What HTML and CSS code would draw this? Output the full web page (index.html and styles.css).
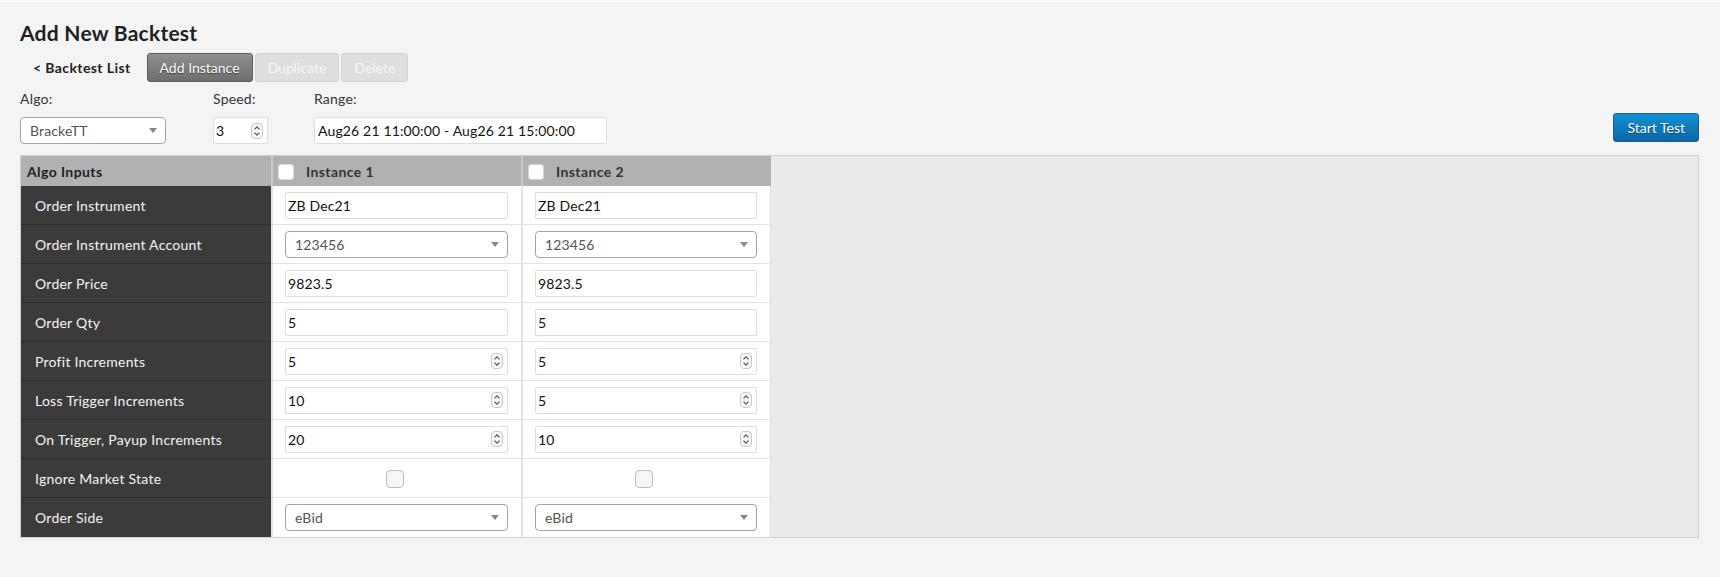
FILE: index.html
```html
<!DOCTYPE html>
<html lang="en">
<head>
<meta charset="utf-8">
<title>Add New Backtest</title>
<link rel="stylesheet" href="styles.css">
</head>
<body>
<div class="topstrip"></div>
<main class="page">
  <h1 class="title">Add New Backtest</h1>
  <div class="toolbar">
    <a class="back-link">&lt; Backtest List</a>
    <button class="btn btn-dark">Add Instance</button>
    <button class="btn btn-disabled">Duplicate</button>
    <button class="btn btn-disabled">Delete</button>
  </div>
  <div class="form-row">
    <div class="group group-algo">
      <label class="lbl">Algo:</label>
      <div class="select select-algo"><span class="sel-text">BrackeTT</span><svg class="caret" width="8" height="5" viewBox="0 0 8 5"><path d="M0 0h8L4 5z" fill="#888"/></svg></div>
    </div>
    <div class="group group-speed">
      <label class="lbl">Speed:</label>
      <div class="field field-speed"><span class="val">3</span><svg class="spin" width="12" height="16" viewBox="0 0 12 16"><rect x="0.5" y="0.5" width="11" height="15" rx="3.5" fill="#f7f7f7" stroke="#c9c9c9"/><path d="M3.5 6.3L6 3.8l2.5 2.5M3.5 9.7L6 12.2l2.5-2.5" fill="none" stroke="#555" stroke-width="1.2"/></svg></div>
    </div>
    <div class="group group-range">
      <label class="lbl">Range:</label>
      <div class="field field-range"><span class="val">Aug26 21 11:00:00 - Aug26 21 15:00:00</span></div>
    </div>
    <button class="btn btn-blue">Start Test</button>
  </div>

  <section class="panel">
    <table class="grid">
      <colgroup><col class="c-label"><col class="c-inst"><col class="c-inst"></colgroup>
      <thead>
        <tr>
          <th class="h-label">Algo Inputs</th>
          <th class="h-inst"><span class="hbox"></span>Instance 1</th>
          <th class="h-inst"><span class="hbox"></span>Instance 2</th>
        </tr>
      </thead>
      <tbody>
        <tr>
          <td class="label">Order Instrument</td>
          <td class="cell"><div class="field"><span class="val">ZB Dec21</span></div></td>
          <td class="cell"><div class="field"><span class="val">ZB Dec21</span></div></td>
        </tr>
        <tr>
          <td class="label">Order Instrument Account</td>
          <td class="cell"><div class="select"><span class="sel-text">123456</span><svg class="caret" width="8" height="5" viewBox="0 0 8 5"><path d="M0 0h8L4 5z" fill="#888"/></svg></div></td>
          <td class="cell"><div class="select"><span class="sel-text">123456</span><svg class="caret" width="8" height="5" viewBox="0 0 8 5"><path d="M0 0h8L4 5z" fill="#888"/></svg></div></td>
        </tr>
        <tr>
          <td class="label">Order Price</td>
          <td class="cell"><div class="field"><span class="val">9823.5</span></div></td>
          <td class="cell"><div class="field"><span class="val">9823.5</span></div></td>
        </tr>
        <tr>
          <td class="label">Order Qty</td>
          <td class="cell"><div class="field"><span class="val">5</span></div></td>
          <td class="cell"><div class="field"><span class="val">5</span></div></td>
        </tr>
        <tr>
          <td class="label">Profit Increments</td>
          <td class="cell"><div class="field"><span class="val">5</span><svg class="spin" width="12" height="16" viewBox="0 0 12 16"><rect x="0.5" y="0.5" width="11" height="15" rx="3.5" fill="#f7f7f7" stroke="#c9c9c9"/><path d="M3.5 6.3L6 3.8l2.5 2.5M3.5 9.7L6 12.2l2.5-2.5" fill="none" stroke="#555" stroke-width="1.2"/></svg></div></td>
          <td class="cell"><div class="field"><span class="val">5</span><svg class="spin" width="12" height="16" viewBox="0 0 12 16"><rect x="0.5" y="0.5" width="11" height="15" rx="3.5" fill="#f7f7f7" stroke="#c9c9c9"/><path d="M3.5 6.3L6 3.8l2.5 2.5M3.5 9.7L6 12.2l2.5-2.5" fill="none" stroke="#555" stroke-width="1.2"/></svg></div></td>
        </tr>
        <tr>
          <td class="label">Loss Trigger Increments</td>
          <td class="cell"><div class="field"><span class="val">10</span><svg class="spin" width="12" height="16" viewBox="0 0 12 16"><rect x="0.5" y="0.5" width="11" height="15" rx="3.5" fill="#f7f7f7" stroke="#c9c9c9"/><path d="M3.5 6.3L6 3.8l2.5 2.5M3.5 9.7L6 12.2l2.5-2.5" fill="none" stroke="#555" stroke-width="1.2"/></svg></div></td>
          <td class="cell"><div class="field"><span class="val">5</span><svg class="spin" width="12" height="16" viewBox="0 0 12 16"><rect x="0.5" y="0.5" width="11" height="15" rx="3.5" fill="#f7f7f7" stroke="#c9c9c9"/><path d="M3.5 6.3L6 3.8l2.5 2.5M3.5 9.7L6 12.2l2.5-2.5" fill="none" stroke="#555" stroke-width="1.2"/></svg></div></td>
        </tr>
        <tr>
          <td class="label">On Trigger, Payup Increments</td>
          <td class="cell"><div class="field"><span class="val">20</span><svg class="spin" width="12" height="16" viewBox="0 0 12 16"><rect x="0.5" y="0.5" width="11" height="15" rx="3.5" fill="#f7f7f7" stroke="#c9c9c9"/><path d="M3.5 6.3L6 3.8l2.5 2.5M3.5 9.7L6 12.2l2.5-2.5" fill="none" stroke="#555" stroke-width="1.2"/></svg></div></td>
          <td class="cell"><div class="field"><span class="val">10</span><svg class="spin" width="12" height="16" viewBox="0 0 12 16"><rect x="0.5" y="0.5" width="11" height="15" rx="3.5" fill="#f7f7f7" stroke="#c9c9c9"/><path d="M3.5 6.3L6 3.8l2.5 2.5M3.5 9.7L6 12.2l2.5-2.5" fill="none" stroke="#555" stroke-width="1.2"/></svg></div></td>
        </tr>
        <tr>
          <td class="label">Ignore Market State</td>
          <td class="cell center"><span class="checkbox"></span></td>
          <td class="cell center"><span class="checkbox"></span></td>
        </tr>
        <tr class="last">
          <td class="label">Order Side</td>
          <td class="cell"><div class="select"><span class="sel-text">eBid</span><svg class="caret" width="8" height="5" viewBox="0 0 8 5"><path d="M0 0h8L4 5z" fill="#888"/></svg></div></td>
          <td class="cell"><div class="select"><span class="sel-text">eBid</span><svg class="caret" width="8" height="5" viewBox="0 0 8 5"><path d="M0 0h8L4 5z" fill="#888"/></svg></div></td>
        </tr>
      </tbody>
    </table>
  </section>
</main>
</body>
</html>
```

FILE: styles.css
```css
* { box-sizing: border-box; }

html, body {
  margin: 0;
  padding: 0;
  background: #f4f4f4;
  font-family: Lato, "Open Sans", "Liberation Sans", sans-serif;
  color: #222;
}

.topstrip {
  height: 4px;
  background: #f9f9f9;
  border-bottom: 1px solid #ececec;
}

.page {
  padding: 16px 21px 0 20px;
}

.title {
  margin: 0;
  font-size: 21px;
  line-height: 25px;
  font-weight: 700;
  letter-spacing: 0.25px;
  color: #1d1f22;
}

.toolbar {
  display: flex;
  align-items: center;
  margin-top: 8px;
  gap: 2px;
}

.back-link {
  font-size: 14px;
  font-weight: 700;
  letter-spacing: 0.4px;
  color: #222;
  padding: 0 14px 0 13px;
  line-height: 17px;
}

.btn {
  font-family: inherit;
  font-size: 14px;
  line-height: 17px;
  padding: 5px 12px;
  border-radius: 3px;
  border: 1px solid transparent;
  cursor: default;
}

.btn-dark {
  background: linear-gradient(#909090, #6d6d6d);
  border-color: #5d5d5d;
  color: #fff;
  text-shadow: 0 1px 1px #3a3a3a;
}

.btn-disabled {
  background: #dedede;
  border-color: #d3d3d3;
  color: #f6f6f6;
}

.btn-blue {
  margin-left: auto;
  align-self: flex-end;
  margin-bottom: 2px;
  background: linear-gradient(#1292d6, #0867a7);
  border-color: #235d88;
  color: #fff;
  padding: 5px 13px;
  text-shadow: 0 1px 1px #0b3d63;
}

.form-row {
  display: flex;
  align-items: flex-end;
  margin-top: 8px;
}

.group {
  display: flex;
  flex-direction: column;
}

.group-algo { width: 146px; margin-right: 47px; }
.group-speed { width: 55px; margin-right: 46px; }
.group-range { width: 293px; }

.lbl {
  font-size: 14px;
  line-height: 18px;
  color: #333;
  letter-spacing: 0.2px;
  margin-bottom: 9px;
}

.field {
  display: flex;
  align-items: center;
  height: 27px;
  background: #fff;
  border: 1px solid #dedede;
  border-radius: 2px;
  padding: 0 4px 0 2px;
  font-size: 14px;
  letter-spacing: 0.15px;
  color: #111;
}

.field .val { flex: 1; white-space: nowrap; }

.field-range { padding-left: 3px; }

.spin { flex: none; }

.select {
  display: flex;
  align-items: center;
  height: 27px;
  background: #fff;
  border: 1px solid #a3a3a3;
  border-radius: 4px;
  padding: 0 8px 0 9px;
  font-size: 14px;
  letter-spacing: 0.15px;
  color: #555;
}

.select .sel-text { flex: 1; }
.caret { flex: none; }

.panel {
  margin-top: 11px;
  height: 383px;
  background: #ebebeb;
  border: 1px solid #cfcfcf;
  display: flex;
  align-items: flex-start;
}

.grid {
  border-collapse: separate;
  border-spacing: 0;
  table-layout: fixed;
  width: 750px;
}

.c-label { width: 250px; }
.c-inst { width: 250px; }

.grid th {
  height: 30px;
  background: #b1b1b1;
  text-align: left;
  font-size: 14px;
  font-weight: 700;
  letter-spacing: 0.4px;
  padding: 0;
  vertical-align: middle;
}

.h-label {
  padding-left: 6px !important;
  color: #1e1e1e;
}

.h-inst {
  border-left: 2px solid #c9c9c9;
  color: #333;
  padding-left: 5px !important;
}

.hbox {
  display: inline-block;
  width: 16px;
  height: 16px;
  background: #fff;
  border: 1px solid #d8d8d8;
  border-radius: 3px;
  vertical-align: -3px;
  margin-right: 12px;
}

.grid td {
  height: 39px;
  padding: 0;
  vertical-align: middle;
}

.label {
  background: #3b3b3b;
  color: #f4f4f4;
  font-size: 14px;
  letter-spacing: 0.25px;
  padding-left: 14px !important;
  border-bottom: 1px solid #2e2e2e;
}

.cell {
  background: #fff;
  border-left: 2px solid #e3e3e3;
  border-bottom: 1px solid #e3e3e3;
  padding: 0 13px 0 12px !important;
}

.grid td.cell:last-child { border-right: 1px solid #dcdcdc; }

.grid tr.last td { border-bottom: none; }

.center { text-align: center; }

.checkbox {
  display: inline-block;
  width: 18px;
  height: 18px;
  background: #f6f6f6;
  border: 1px solid #bdbdbd;
  border-radius: 4px;
  vertical-align: middle;
  margin-left: -4px;
}
```
